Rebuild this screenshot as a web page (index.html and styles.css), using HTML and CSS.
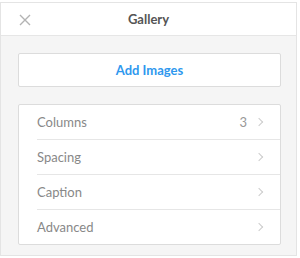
FILE: index.html
```html
<!DOCTYPE html>
<html lang="en">
<head>
  <meta charset="UTF-8" />
  <title>Gallery</title>
  <link rel="stylesheet" href="styles.css">
</head>
<body>
  <div class="panel">
    <div class="header">
      <svg class="close" width="12" height="12" viewBox="0 0 12 12">
        <path d="M1 1L11 11M11 1L1 11" stroke="#b3b3b3" stroke-width="1.4" fill="none"/>
      </svg>
      <div class="title">Gallery</div>
    </div>

    <div class="content">
      <button class="add-btn">Add Images</button>

      <div class="list">
        <div class="row">
          <span class="label">Columns</span>
          <span class="value">3</span>
          <span class="chev"></span>
        </div>
        <div class="row">
          <span class="label">Spacing</span>
          <span class="chev"></span>
        </div>
        <div class="row">
          <span class="label">Caption</span>
          <span class="chev"></span>
        </div>
        <div class="row">
          <span class="label">Advanced</span>
          <span class="chev"></span>
        </div>
      </div>
    </div>
  </div>
</body>
</html>
```

FILE: styles.css
```css
body {
  margin: 0;
  background: #fff;
  font-family: 'Lato', 'Open Sans', sans-serif;
}

.panel {
  margin-top: 2px;
  width: 295px;
  height: 252px;
  border: 1px solid #e4e4e4;
  background: #f5f5f5;
  box-sizing: content-box;
}

.header {
  height: 32px;
  background: #fff;
  border-bottom: 1px solid #e6e6e6;
  position: relative;
  display: flex;
  align-items: center;
  justify-content: center;
}

.close {
  position: absolute;
  left: 18px;
  top: 11px;
}

.title {
  font-size: 13px;
  font-weight: bold;
  color: #555;
}

.content {
  padding: 17px 15px 0 17px;
}

.add-btn {
  display: block;
  width: 100%;
  height: 34px;
  background: #fff;
  border: 1px solid #dcdcdc;
  border-radius: 2px;
  font-family: inherit;
  font-size: 13px;
  font-weight: bold;
  color: #2e98ee;
  cursor: pointer;
}

.list {
  margin-top: 17px;
  background: #fff;
  border: 1px solid #dcdcdc;
  border-radius: 2px;
}

.row {
  height: 34px;
  margin-left: 18px;
  padding-right: 18px;
  display: flex;
  align-items: center;
  border-top: 1px solid #e6e6e6;
  font-size: 13px;
  color: #888;
}

.row:first-child {
  border-top: none;
}

.label {
  flex: 1;
}

.value {
  color: #999;
  margin-right: 9px;
}

.chev {
  width: 5px;
  height: 5px;
  border-top: 1px solid #ccc;
  border-right: 1px solid #ccc;
  transform: rotate(45deg);
}
```
